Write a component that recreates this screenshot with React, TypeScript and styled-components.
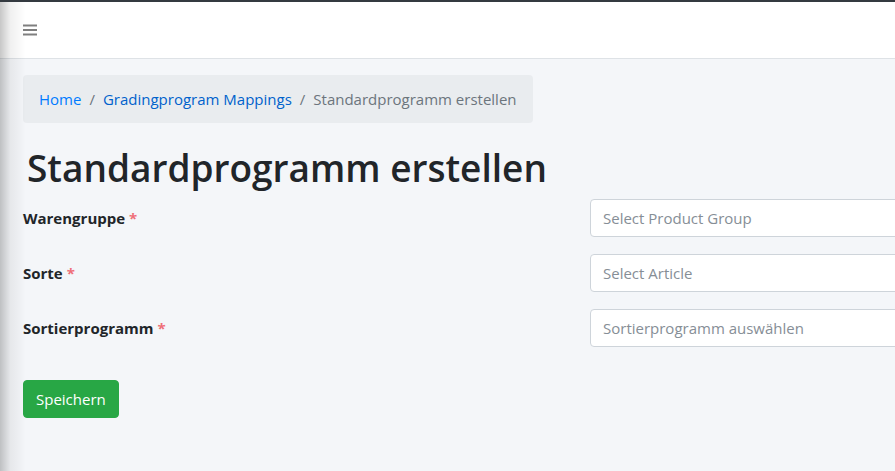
import React from "react";
import styled, { createGlobalStyle } from "styled-components";

const Global = createGlobalStyle`
  html, body { margin: 0; padding: 0; }
  body {
    background: #f4f6f9;
    font-family: "Open Sans", "Noto Sans", Arial, sans-serif;
    color: #212529;
    overflow: hidden;
    width: 895px;
    height: 471px;
  }
  * { box-sizing: border-box; }
`;

const Wrapper = styled.div`
  position: relative;
  min-height: 471px;
  overflow: hidden;
  border-top: 2px solid #343a40;
  &::before {
    content: "";
    position: absolute;
    left: 0;
    top: 0;
    bottom: 0;
    width: 26px;
    background: linear-gradient(to right, rgba(0,0,0,0.22), rgba(0,0,0,0.06) 40%, rgba(0,0,0,0));
    pointer-events: none;
    z-index: 5;
  }
`;

const Navbar = styled.nav`
  height: 57px;
  background: #fff;
  border-bottom: 1px solid #dee2e6;
  display: flex;
  align-items: center;
  padding-left: 23px;
`;

const MenuButton = styled.button`
  border: 0;
  background: none;
  padding: 0;
  display: flex;
  color: rgba(0,0,0,0.5);
  cursor: pointer;
`;

const Content = styled.main`
  padding: 16px 23px;
`;

const Breadcrumb = styled.ol`
  display: inline-flex;
  align-items: center;
  list-style: none;
  margin: 0 0 16px;
  padding: 12px 16px;
  background: #e9ecef;
  border-radius: 4px;
  font-size: 15px;
  line-height: 24px;
`;

const Crumb = styled.li<{ $active?: boolean }>`
  color: ${(p) => (p.$active ? "#6c757d" : "#007bff")};
  & + li::before {
    content: "/";
    color: #6c757d;
    padding: 0 8px;
  }
  li + &::before {
    content: "/";
    color: #6c757d;
    padding: 0 8px;
  }
`;

const CrumbLink = styled.a<{ $dark?: boolean }>`
  color: ${(p) => (p.$dark ? "#0062cc" : "inherit")};
  text-decoration: none;
`;

const Title = styled.h1`
  margin: 5px 0 7px;
  padding-left: 4px;
  font-size: 37px;
  font-weight: 600;
  line-height: 48px;
  color: #212529;
`;

const Form = styled.form`
  display: flex;
  flex-direction: column;
  gap: 17px;
`;

const Row = styled.div`
  display: grid;
  grid-template-columns: 567px 420px;
  align-items: center;
`;

const Label = styled.label`
  font-weight: 700;
  font-size: 15px;
  color: #212529;
`;

const Required = styled.span`
  color: #ef6f78;
  margin-left: 4px;
`;

const Input = styled.input`
  height: 38px;
  width: 100%;
  padding: 6px 12px;
  border: 1px solid #ced4da;
  border-radius: 4px;
  background: #fff;
  font-family: inherit;
  font-size: 15px;
  &::placeholder { color: #868e96; }
`;

const SaveButton = styled.button`
  align-self: flex-start;
  margin-top: 16px;
  height: 38px;
  padding: 0 12px;
  background: #28a745;
  border: 1px solid #28a745;
  border-radius: 4px;
  color: #fff;
  font-family: inherit;
  font-size: 15px;
  cursor: pointer;
`;

const fields = [
  { label: "Warengruppe", placeholder: "Select Product Group" },
  { label: "Sorte", placeholder: "Select Article" },
  { label: "Sortierprogramm", placeholder: "Sortierprogramm auswählen" },
];

export default function App() {
  return (
    <>
      <Global />
      <Wrapper>
        <Navbar>
          <MenuButton aria-label="Menu">
            <svg width="14" height="12" viewBox="0 0 14 12">
              <rect x="0" y="0.5" width="14" height="2" fill="currentColor" />
              <rect x="0" y="5" width="14" height="2" fill="currentColor" />
              <rect x="0" y="9.5" width="14" height="2" fill="currentColor" />
            </svg>
          </MenuButton>
        </Navbar>
        <Content>
          <Breadcrumb>
            <Crumb><CrumbLink href="#">Home</CrumbLink></Crumb>
            <Crumb><CrumbLink href="#" $dark>Gradingprogram Mappings</CrumbLink></Crumb>
            <Crumb $active>Standardprogramm erstellen</Crumb>
          </Breadcrumb>
          <Title>Standardprogramm erstellen</Title>
          <Form onSubmit={(e) => e.preventDefault()}>
            {fields.map((f) => (
              <Row key={f.label}>
                <Label>
                  {f.label}
                  <Required>*</Required>
                </Label>
                <Input placeholder={f.placeholder} />
              </Row>
            ))}
            <SaveButton type="submit">Speichern</SaveButton>
          </Form>
        </Content>
      </Wrapper>
    </>
  );
}
